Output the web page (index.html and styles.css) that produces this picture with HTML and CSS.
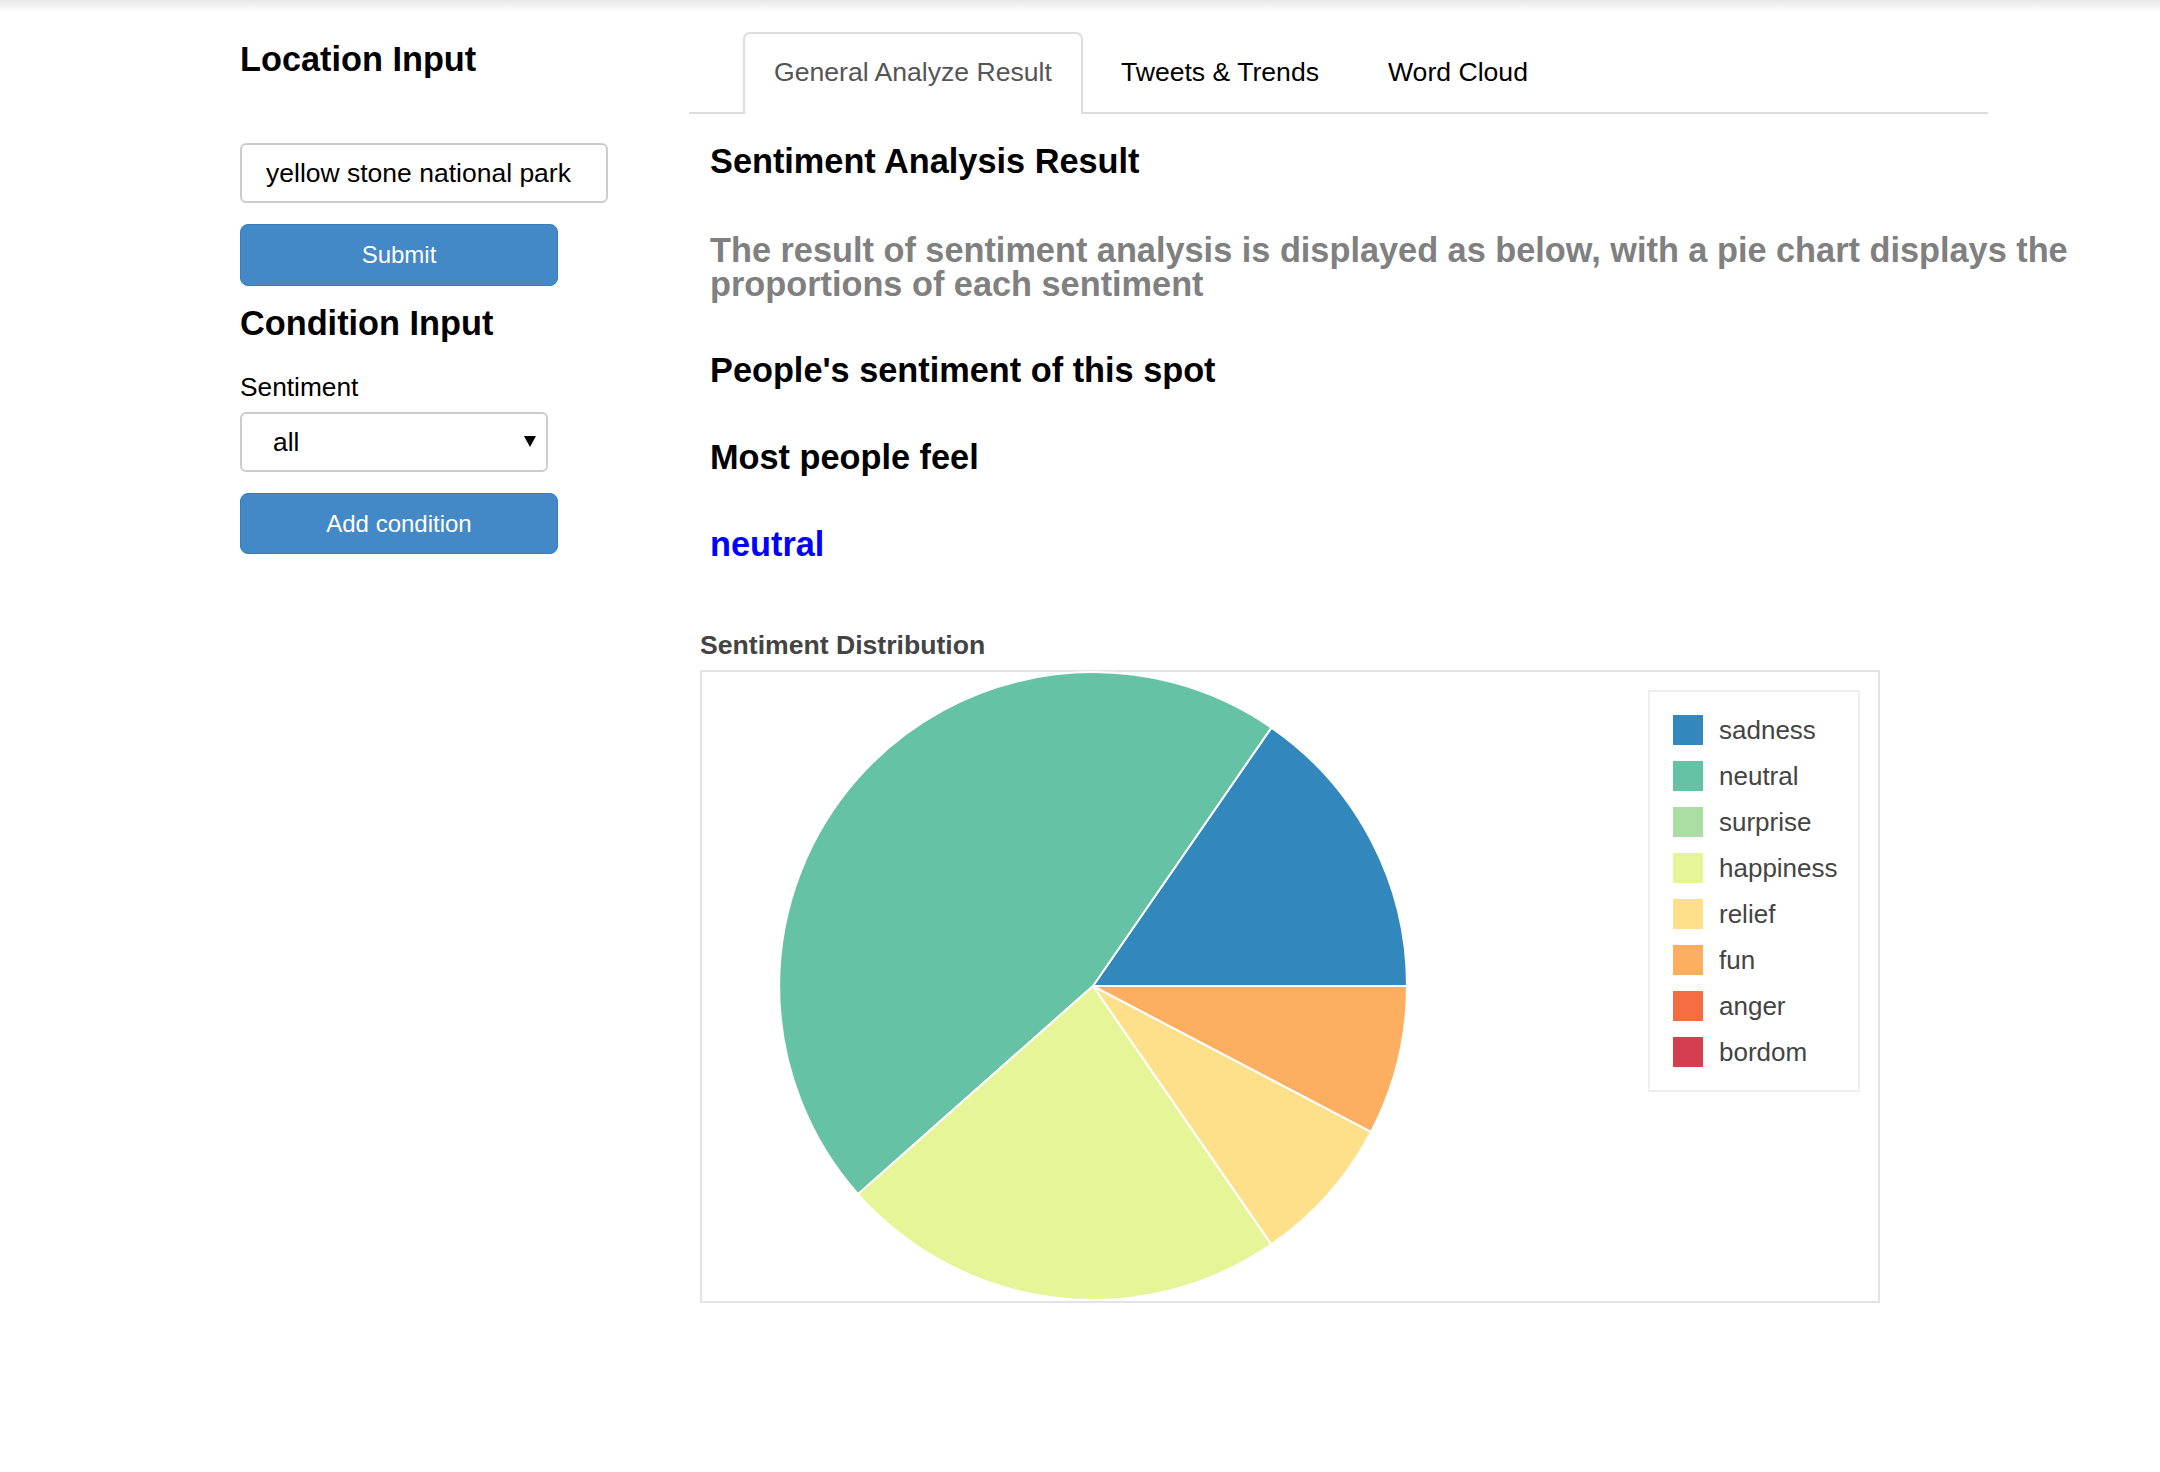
FILE: index.html
```html
<!DOCTYPE html>
<html lang="en">
<head>
<meta charset="utf-8">
<title>Sentiment Analysis</title>
<link rel="stylesheet" href="styles.css">
</head>
<body>
<div class="topbar"></div>
<div class="page">
  <aside class="sidebar">
    <h2 class="side-title">Location Input</h2>
    <input class="text-input" type="text" value="yellow stone national park">
    <button class="btn">Submit</button>
    <h2 class="side-title cond-title">Condition Input</h2>
    <label class="field-label">Sentiment</label>
    <div class="select-box"><span class="select-value">all</span></div>
    <button class="btn btn-add">Add condition</button>
  </aside>
  <main class="main">
    <ul class="tabs">
      <li class="tab active">General Analyze Result</li>
      <li class="tab">Tweets &amp; Trends</li>
      <li class="tab">Word Cloud</li>
    </ul>
    <section class="tab-content">
      <h3 class="res-title">Sentiment Analysis Result</h3>
      <p class="res-desc">The result of sentiment analysis is displayed as below, with a pie chart displays the proportions of each sentiment</p>
      <h3 class="res-title spot">People's sentiment of this spot</h3>
      <h3 class="res-title most">Most people feel</h3>
      <h3 class="res-title feel">neutral</h3>
      <div class="chart-section">
        <div class="chart-title">Sentiment Distribution</div>
        <div class="chart">
          <svg class="pie" width="628" height="628" viewBox="0 0 628 628">
            <path d="M314,314 L628,314 A314,314 0 0 0 492.4,55.6 Z" fill="#3288bd"/>
            <path d="M314,314 L492.4,55.6 A314,314 0 0 0 79.0,522.2 Z" fill="#66c2a5"/>
            <path d="M314,314 L79.0,522.2 A314,314 0 0 0 492.4,572.4 Z" fill="#e6f598"/>
            <path d="M314,314 L492.4,572.4 A314,314 0 0 0 592.0,459.9 Z" fill="#fee08b"/>
            <path d="M314,314 L592.0,459.9 A314,314 0 0 0 628,314 Z" fill="#fdae61"/>
          </svg>
          <div class="legend">
            <div class="legend-item"><span class="swatch" style="background:#3288bd"></span><span class="legend-label">sadness</span></div>
            <div class="legend-item"><span class="swatch" style="background:#66c2a5"></span><span class="legend-label">neutral</span></div>
            <div class="legend-item"><span class="swatch" style="background:#abdda4"></span><span class="legend-label">surprise</span></div>
            <div class="legend-item"><span class="swatch" style="background:#e6f598"></span><span class="legend-label">happiness</span></div>
            <div class="legend-item"><span class="swatch" style="background:#fee08b"></span><span class="legend-label">relief</span></div>
            <div class="legend-item"><span class="swatch" style="background:#fdae61"></span><span class="legend-label">fun</span></div>
            <div class="legend-item"><span class="swatch" style="background:#f46d43"></span><span class="legend-label">anger</span></div>
            <div class="legend-item"><span class="swatch" style="background:#d53e4f"></span><span class="legend-label">bordom</span></div>
          </div>
        </div>
      </div>
    </section>
  </main>
</div>
</body>
</html>
```

FILE: styles.css
```css
* { box-sizing: border-box; }
html, body { margin: 0; padding: 0; background: #fff; }
body {
  font-family: "Liberation Sans", Arial, Helvetica, sans-serif;
  color: #000;
  width: 2160px;
  height: 1472px;
  overflow: hidden;
}
.topbar {
  height: 12px;
  background: linear-gradient(to bottom, #e6e6e6, #ffffff);
}
.page {
  display: flex;
  align-items: flex-start;
  padding-left: 240px;
}
.sidebar {
  width: 449px;
  flex: none;
  display: flex;
  flex-direction: column;
  align-items: flex-start;
}
.side-title {
  margin: 27px 0 0 0;
  font-size: 34.3px;
  line-height: 40px;
  font-weight: bold;
}
.cond-title { margin-top: 17px; }
.text-input {
  margin-top: 64px;
  width: 368px;
  height: 60px;
  border: 2px solid #cccccc;
  border-radius: 6px;
  padding: 0 0 0 24px;
  font-family: "Liberation Sans", Arial, sans-serif;
  font-size: 26.5px;
  color: #000;
  outline: none;
}
.btn {
  margin-top: 21px;
  width: 318px;
  height: 62px;
  background: #4388c7;
  border: 1.5px solid #3a7dbc;
  border-radius: 8px;
  color: #fff;
  font-family: "Liberation Sans", Arial, sans-serif;
  font-size: 24px;
  padding: 0;
}
.btn-add { height: 61px; }
.field-label {
  margin-top: 29px;
  font-size: 26.3px;
  line-height: 30px;
}
.select-box {
  position: relative;
  margin-top: 10px;
  width: 308px;
  height: 60px;
  border: 2px solid #cccccc;
  border-radius: 6px;
  padding-left: 31px;
  font-size: 26.3px;
  line-height: 56px;
}
.select-box::after {
  content: "";
  position: absolute;
  right: 10px;
  top: 22px;
  width: 0;
  height: 0;
  border-left: 6px solid transparent;
  border-right: 6px solid transparent;
  border-top: 11px solid #000;
}
.main {
  flex: 1;
  min-width: 0;
}
.tabs {
  list-style: none;
  margin: 20px 0 0 0;
  padding: 0 0 0 54px;
  width: 1299px;
  display: flex;
  border-bottom: 2px solid #dddddd;
}
.tab {
  margin-right: 7px;
  margin-bottom: -2px;
  padding: 0 29px 3px 29px;
  height: 82px;
  line-height: 77px;
  border: 2px solid transparent;
  border-bottom: none;
  border-radius: 7px 7px 0 0;
  font-size: 26.6px;
  color: #000;
  background: transparent;
}
.tab.active {
  border-color: #dddddd;
  background: #fff;
  color: #555555;
}
.tab-content {
  padding-left: 21px;
}
.res-title {
  margin: 27px 0 0 0;
  font-size: 34.3px;
  line-height: 40px;
  font-weight: bold;
}
.res-desc {
  margin: 52px 0 0 0;
  width: 1420px;
  font-size: 34.3px;
  line-height: 34px;
  font-weight: bold;
  color: #808080;
}
.spot { margin-top: 49px; }
.most { margin-top: 47px; }
.feel { margin-top: 47px; color: #0000ff; }
.chart-section {
  margin-left: -10px;
  margin-top: 66px;
}
.chart-title {
  font-size: 26.6px;
  line-height: 30px;
  font-weight: bold;
  color: #444444;
}
.chart {
  margin-top: 10px;
  width: 1180px;
  height: 633px;
  border: 2px solid #e3e3e3;
  display: flex;
  align-items: flex-start;
}
.pie {
  display: block;
  flex: none;
  margin-left: 77px;
  overflow: visible;
}
.pie path {
  stroke: #ffffff;
  stroke-width: 2;
  stroke-linejoin: round;
}
.legend {
  margin-left: auto;
  margin-right: 18px;
  margin-top: 18px;
  width: 212px;
  border: 2px solid #eeeeee;
  padding: 23px;
  display: flex;
  flex-direction: column;
  gap: 16px;
}
.legend-item {
  display: flex;
  align-items: center;
  height: 30px;
  gap: 16px;
}
.swatch {
  width: 30px;
  height: 30px;
  flex: none;
}
.legend-label {
  font-size: 26px;
  line-height: 30px;
  color: #444444;
  white-space: nowrap;
}
```
